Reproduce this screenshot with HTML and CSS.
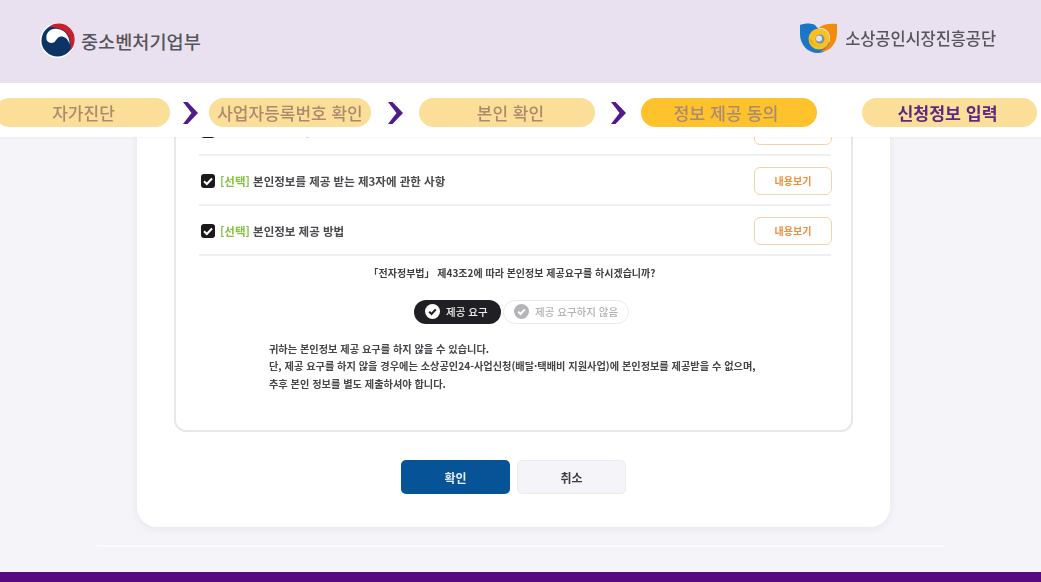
FILE: index.html
```html
<!DOCTYPE html>
<html lang="ko">
<head>
<meta charset="utf-8">
<title>정보 제공 동의</title>
<link rel="stylesheet" href="styles.css">
</head>
<body>
<div class="page">
  <header class="top">
    <div class="brand brand-left">
      <svg class="logo-gov" viewBox="0 0 36 36" aria-hidden="true">
        <circle cx="18" cy="18" r="18" fill="#fff"/>
        <circle cx="18" cy="18" r="16.500" fill="#0c3565"/>
        <path d="M9 4A16.500 16.500 0 0 1 31 28.500C33 20 30 10 22 6.500C18 4.500 13 4 9 4z" fill="#c8202f"/>
        <path d="M6.500 15C6.500 9 12 5.500 17 6C24 6.500 30.500 12 30.500 22C28.500 15.500 24.500 13.500 21 14C18 14.500 17.500 17 15 19.500C11 22 6.500 20 6.500 15z" fill="#fff"/>
      </svg>
      <span class="brand-text">중소벤처기업부</span>
    </div>
    <div class="brand brand-right">
      <svg class="logo-semas" viewBox="0 0 38 31" aria-hidden="true">
        <path d="M0 2C5 0 11 0 15 2L31 21C28 27 23 30 18 30C8 30 0 22 0 11z" fill="#1b76c6"/>
        <circle cx="19" cy="16" r="10.500" fill="#f9c11f"/>
        <path d="M37 1C30 0 23 1 18 5C25 4 30 9 30 15C30 21 26 26 20 28.500C30 29.500 37 20 37 10z" fill="#f28c0c"/>
        <path d="M9 15C10 22 17 25 24 22C20 24 13 23 11.500 17z" fill="#f0a415"/>
        <circle cx="20" cy="16" r="4.500" fill="#6f95b5"/>
        <circle cx="19" cy="15.500" r="3" fill="#e4e6ea"/>
      </svg>
      <span class="brand-text brand-text-small">소상공인시장진흥공단</span>
    </div>
  </header>

  <nav class="steps">
    <span class="pill pill-a">자가진단</span>
    <svg class="chev" viewBox="0 0 16 22" aria-hidden="true"><path d="M1 0h4.500l10.500 11L5.500 22H1l8.500-11z"/></svg>
    <span class="pill pill-b">사업자등록번호 확인</span>
    <svg class="chev" viewBox="0 0 16 22" aria-hidden="true"><path d="M1 0h4.500l10.500 11L5.500 22H1l8.500-11z"/></svg>
    <span class="pill pill-c">본인 확인</span>
    <svg class="chev" viewBox="0 0 16 22" aria-hidden="true"><path d="M1 0h4.500l10.500 11L5.500 22H1l8.500-11z"/></svg>
    <span class="pill pill-d">정보 제공 동의</span>
    <span class="pill pill-e">신청정보 입력</span>
  </nav>

  <main class="content">
    <section class="card">
      <div class="panel">
        <div class="row">
          <label class="check-label"><span class="check"><svg viewBox="0 0 14 14"><path d="M3 7.200l2.800 2.800L11 4.500"/></svg></span><span class="tag">[선택]</span> 본인정보 제공 내용</label>
          <button class="view">내용보기</button>
        </div>
        <div class="row">
          <label class="check-label"><span class="check"><svg viewBox="0 0 14 14"><path d="M3 7.200l2.800 2.800L11 4.500"/></svg></span><span class="tag">[선택]</span> 본인정보를 제공 받는 제3자에 관한 사항</label>
          <button class="view">내용보기</button>
        </div>
        <div class="row">
          <label class="check-label"><span class="check"><svg viewBox="0 0 14 14"><path d="M3 7.200l2.800 2.800L11 4.500"/></svg></span><span class="tag">[선택]</span> 본인정보 제공 방법</label>
          <button class="view">내용보기</button>
        </div>
        <p class="question">「전자정부법」 제43조2에 따라 본인정보 제공요구를 하시겠습니까?</p>
        <div class="choices">
          <span class="choice choice-on"><svg class="tick" viewBox="0 0 16 16"><circle cx="8" cy="8" r="8"/><path d="M4.500 8.200l2.500 2.500 4.500-5"/></svg>제공 요구</span>
          <span class="choice choice-off"><svg class="tick" viewBox="0 0 16 16"><circle cx="8" cy="8" r="8"/><path d="M4.500 8.200l2.500 2.500 4.500-5"/></svg>제공 요구하지 않음</span>
        </div>
        <p class="notice">귀하는 본인정보 제공 요구를 하지 않을 수 있습니다.<br>단, 제공 요구를 하지 않을 경우에는 소상공인24-사업신청(배달·택배비 지원사업)에 본인정보를 제공받을 수 없으며,<br>추후 본인 정보를 별도 제출하셔야 합니다.</p>
      </div>
      <div class="actions">
        <button class="btn btn-primary">확인</button>
        <button class="btn btn-cancel">취소</button>
      </div>
    </section>
    <div class="fade-line"></div>
  </main>
  <footer class="bottom"></footer>
</div>
</body>
</html>
```
FILE: styles.css
```css
* { box-sizing: border-box; }
html, body { margin: 0; height: 100%; }
body { font-family: "Noto Sans CJK KR", "Noto Sans", sans-serif; background: #f4f4f9; overflow: hidden; }
.page { width: 1041px; height: 582px; display: flex; flex-direction: column; overflow: hidden; filter: blur(.5px); }

.top { flex: 0 0 83px; background: #e9e1ef; display: flex; justify-content: space-between; padding: 23px 45px 0 40px; }
.brand { display: flex; align-items: center; height: 35px; }
.logo-gov { width: 35px; height: 35px; margin-right: 6px; }
.logo-semas { width: 38px; height: 31px; margin-right: 7px; }
.brand-right { height: 31px; }
.brand-text { font-size: 18.600px; font-weight: 500; color: #55555d; white-space: nowrap; }
.brand-text-small { font-size: 16.500px; letter-spacing: -.1px; padding-bottom: 2px; }

.steps { flex: 0 0 54px; background: #fff; display: flex; align-items: center; margin-left: -5px; padding-top: 5px; box-shadow: 0 1px 2px rgba(0,0,0,.04); position: relative; z-index: 1; }
.pill { height: 29px; border-radius: 15px; background: #fbdf98; color: #ab8a70; font-size: 17px; font-weight: 500; display: flex; align-items: center; justify-content: center; white-space: nowrap; flex: none; }
.pill-a { width: 175px; margin-right: 12px; padding-left: 2px; }
.pill-b { width: 162px; margin-right: 16px; }
.pill-c { width: 176px; margin-right: 15px; padding-left: 7px; }
.pill-d { width: 176px; margin-right: 45px; background: #fdc22c; font-size: 17.300px; padding-right: 6px; }
.pill-e { width: 175px; color: #5a2a82; font-weight: 700; font-size: 17.300px; padding-right: 4px; }
.chev { width: 16px; height: 22px; flex: none; margin-right: 11px; }
.chev path { fill: #531a8c; }
.pill-b + .chev { margin-right: 16px; }
.pill-c + .chev { margin-right: 15px; }

.content { flex: 1 1 0; min-height: 0; overflow: hidden; display: flex; flex-direction: column; justify-content: flex-end; align-items: flex-start; padding: 0 0 25px 137px; }
.card { flex: none; width: 753px; background: #fff; border-radius: 20px; box-shadow: 0 2px 8px rgba(40,40,70,.07); padding: 0 37px 33px; }
.fade-line { flex: none; width: 848px; height: 2px; margin: 18px 0 0 -40px; background: #fbfbfd; }
.panel { border: 2px solid #e8e8eb; border-top: 0; border-radius: 0 0 12px 12px; padding: 0 20px 38px 23px; filter: blur(.3px); }

.row { height: 50px; padding-top: 2px; display: flex; align-items: center; justify-content: space-between; border-bottom: 2px solid #efeff2; }
.check-label { display: flex; align-items: center; font-size: 11.500px; font-weight: 700; color: #4a4a4e; white-space: pre; }
.check { width: 14px; height: 14px; border-radius: 3px; background: #1a1a1c; margin: 0 5px 0 2px; display: flex; }
.check svg { width: 14px; height: 14px; fill: none; stroke: #fff; stroke-width: 2; }
.tag { color: #84c341; }
.view { width: 78px; height: 28px; border: 1.500px solid #f3d2ae; border-radius: 6px; background: #fff; color: #ee8f3f; font: 700 10px "Noto Sans CJK KR", sans-serif; margin-right: -1px; }

.question { margin: 9px 0 0; padding-right: 6px; font-size: 10px; line-height: 16px; font-weight: 700; color: #3d3d42; text-align: center; }
.choices { display: flex; justify-content: center; gap: 2px; margin-top: 19px; padding-left: 13px; }
.choice { height: 24px; border-radius: 12px; display: flex; align-items: center; font-size: 10.500px; font-weight: 500; white-space: nowrap; }
.choice-on { width: 87px; background: #202024; color: #f0f0f0; padding-left: 11px; }
.choice-off { width: 126px; border: 1.500px solid #e9e9ec; background: #fff; color: #b2b2b6; padding-left: 10px; }
.tick { width: 15px; height: 15px; margin-right: 6px; flex: none; }
.tick circle { fill: #fff; }
.tick path { fill: none; stroke: #202024; stroke-width: 2.200; }
.choice-off .tick circle { fill: #b5b5b9; }
.choice-off .tick path { stroke: #fff; }

.notice { margin: 16px 0 0 70px; font-size: 10.200px; line-height: 17.500px; font-weight: 700; color: #45454a; white-space: nowrap; }

.actions { display: flex; justify-content: center; gap: 7px; margin-top: 28px; }
.btn { width: 109px; height: 34px; border-radius: 5px; font: 700 12px "Noto Sans CJK KR", sans-serif; border: 0; }
.btn-primary { background: #075397; color: #e8eef5; }
.btn-cancel { background: #f4f4f9; color: #3b3b40; border: 1.500px solid #ebebf0; }

.bottom { flex: 0 0 10px; background: #550a80; }
```
